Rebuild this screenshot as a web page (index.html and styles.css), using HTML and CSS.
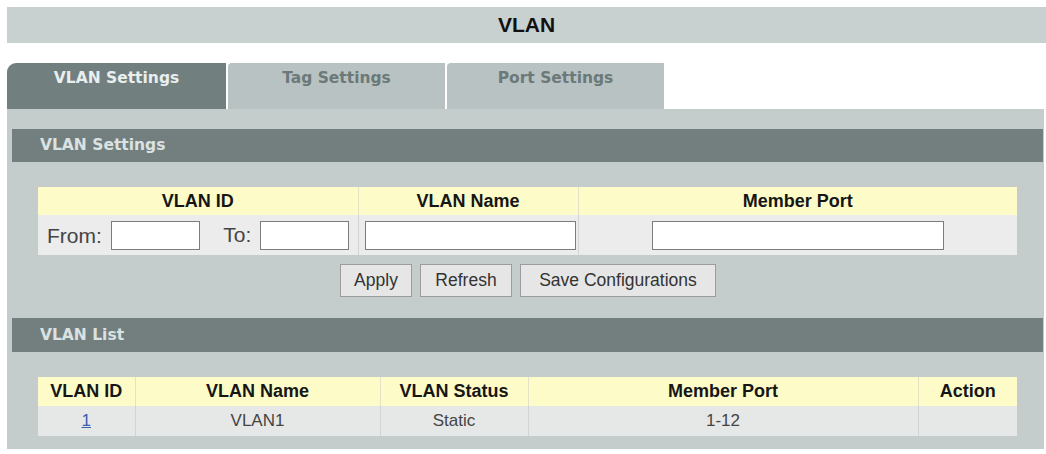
FILE: index.html
```html
<!DOCTYPE html>
<html>
<head>
<meta charset="utf-8">
<link rel="stylesheet" href="styles.css">
</head>
<body>
<div class="page">
  <div class="titlebar">VLAN</div>
  <div class="tabs">
    <div class="tab active">VLAN Settings</div>
    <div class="tab">Tag Settings</div>
    <div class="tab">Port Settings</div>
  </div>
  <div class="panel">
    <div class="section-head">VLAN Settings</div>
    <table class="grid form-grid">
      <colgroup><col class="c1"><col class="c2"><col class="c3"></colgroup>
      <thead>
        <tr><th>VLAN ID</th><th>VLAN Name</th><th>Member Port</th></tr>
      </thead>
      <tbody>
        <tr class="input-row">
          <td class="range">
            <span class="lbl">From:</span><input class="txt short" type="text">
            <span class="lbl to">To:</span><input class="txt short" type="text">
          </td>
          <td class="name-cell"><input class="txt name" type="text"></td>
          <td class="center"><input class="txt port" type="text"></td>
        </tr>
      </tbody>
    </table>
    <div class="buttons">
      <button class="btn apply">Apply</button>
      <button class="btn refresh">Refresh</button>
      <button class="btn save">Save Configurations</button>
    </div>
    <div class="section-head list-head">VLAN List</div>
    <table class="grid list-grid">
      <colgroup><col class="l1"><col class="l2"><col class="l3"><col class="l4"><col class="l5"></colgroup>
      <thead>
        <tr><th>VLAN ID</th><th>VLAN Name</th><th>VLAN Status</th><th>Member Port</th><th>Action</th></tr>
      </thead>
      <tbody>
        <tr class="data-row"><td><a href="#" class="idlink">1</a></td><td>VLAN1</td><td>Static</td><td>1-12</td><td></td></tr>
      </tbody>
    </table>
  </div>
</div>
</body>
</html>
```
FILE: styles.css
```css
html, body {
  margin: 0;
  padding: 0;
  background: #ffffff;
}
body {
  width: 1046px;
  height: 454px;
  overflow: hidden;
  font-family: "Liberation Sans", Arial, sans-serif;
}
.page {
  padding-top: 7px;
  padding-left: 7px;
}
.titlebar {
  height: 36px;
  background: #c9d0d0;
  color: #111;
  font-weight: bold;
  font-size: 21px;
  line-height: 36px;
  text-align: center;
}
.tabs {
  display: flex;
  gap: 2px;
  margin-top: 20px;
  height: 46px;
}
.tab {
  width: 217px;
  background: #b8c2c2;
  color: #6c7979;
  font-family: "DejaVu Sans", Verdana, sans-serif;
  font-weight: bold;
  font-size: 15.5px;
  text-align: center;
  padding-top: 6px;
  box-sizing: border-box;
  border-top-left-radius: 4px;
}
.tab.active {
  width: 219px;
  background: #727f7f;
  color: #e9eeee;
  border-top-left-radius: 9px;
}
.panel {
  width: 1037px;
  height: 340px;
  background: #c5cccc;
  padding: 20px 1px 0 5px;
  box-sizing: border-box;
}
.section-head {
  height: 33px;
  background: #737f7f;
  color: #dbe2e2;
  font-family: "DejaVu Sans", Verdana, sans-serif;
  font-weight: bold;
  font-size: 15.5px;
  line-height: 33px;
  padding-left: 28px;
}
.list-head {
  height: 34px;
  line-height: 34px;
  margin-top: 21px;
}
.grid {
  width: 979px;
  margin-left: 26px;
  border-collapse: collapse;
  table-layout: fixed;
}
.form-grid { margin-top: 25px; }
.list-grid { margin-top: 25px; }
.grid th {
  background: #fdfcc8;
  color: #161616;
  font-weight: bold;
  font-size: 18px;
  height: 28px;
  padding: 0;
  border-left: 1px solid #e2e2c6;
}
.grid td {
  background: #ececec;
  border-left: 1px solid #d2d4d4;
  padding: 0;
}
.grid th:first-child, .grid td:first-child { border-left: none; }
.c1 { width: 320px; }
.c2 { width: 220px; }
.c3 { width: 439px; }
.input-row td { height: 40px; }
.range {
  padding-left: 9px !important;
  white-space: nowrap;
}
.lbl {
  font-size: 21px;
  color: #444;
  vertical-align: middle;
}
.lbl.to { margin-left: 19px; }
.txt {
  height: 29px;
  box-sizing: border-box;
  border: 1px solid #7c7c7c;
  background: #fff;
  vertical-align: middle;
  margin: 0;
  padding: 0;
}
.short { width: 89px; margin-left: 9px; }
.name-cell { padding-left: 6px !important; }
.name { width: 211px; }
.center { text-align: center; }
.port { width: 292px; }
.buttons {
  display: flex;
  justify-content: center;
  gap: 8px;
  margin-top: 9px;
  padding-right: 5px;
  margin-left: 6px;
}
.btn {
  height: 33px;
  margin: 0;
  padding: 0;
  border: 1px solid #9c9c9c;
  background: #e6e6e6;
  color: #333;
  font-family: "Liberation Sans", Arial, sans-serif;
  font-size: 17.5px;
}
.apply { width: 72px; }
.refresh { width: 92px; }
.save { width: 196px; }
.l1 { width: 97px; }
.l2 { width: 245px; }
.l3 { width: 148px; }
.l4 { width: 390px; }
.l5 { width: 99px; }
.list-grid th { height: 29px; }
.data-row td {
  height: 30px;
  background: #e6e7e7;
  text-align: center;
  font-size: 17px;
  color: #444;
}
.idlink {
  color: #3a5fb0;
  text-decoration: underline;
}
```
